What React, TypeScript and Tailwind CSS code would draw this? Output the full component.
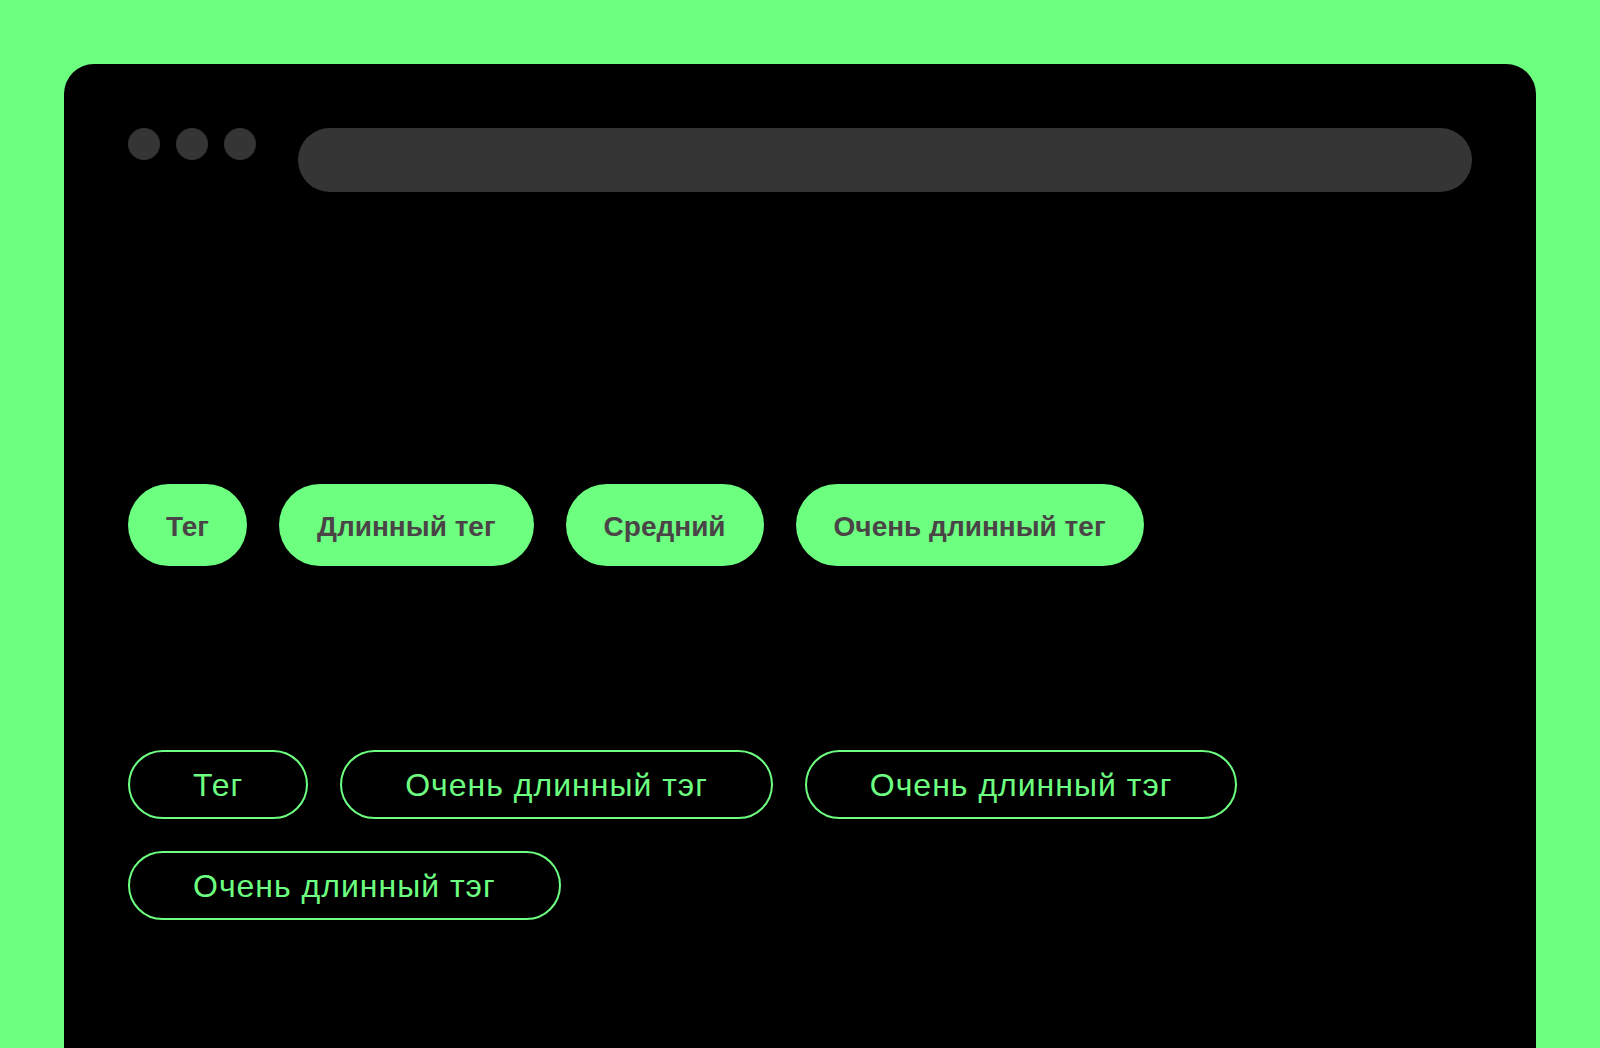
import React from 'react';

const filledTags = ['Тег', 'Длинный тег', 'Средний', 'Очень длинный тег'];
const outlineTags = ['Тег', 'Очень длинный тэг', 'Очень длинный тэг', 'Очень длинный тэг'];

const App = () => {
  return (
    <div
      className="h-[1048px] overflow-hidden bg-[#6cff80] px-16 pt-16"
      style={{ fontFamily: '"Liberation Sans", Arial, sans-serif' }}
    >
      <div className="h-full rounded-t-[30px] bg-black p-16">
        {/* browser chrome */}
        <div className="flex items-start">
          <div className="flex gap-4">
            <span className="h-8 w-8 rounded-full bg-[#353535]" />
            <span className="h-8 w-8 rounded-full bg-[#353535]" />
            <span className="h-8 w-8 rounded-full bg-[#353535]" />
          </div>
          <div className="ml-[42px] h-16 flex-1 rounded-full bg-[#353535]" />
        </div>

        {/* filled tags */}
        <div className="mt-[292px] flex flex-wrap gap-8">
          {filledTags.map((t, i) => (
            <span
              key={i}
              className="flex h-[82px] items-center rounded-full bg-[#6cff80] px-[38px] pt-[3px] text-[28px] font-bold text-[#4a4446]"
            >
              {t}
            </span>
          ))}
        </div>

        {/* outline tags */}
        <div className="mt-[184px] flex max-w-[1150px] flex-wrap gap-8">
          {outlineTags.map((t, i) => (
            <span
              key={i}
              className="flex h-[69px] items-center rounded-full border-2 border-[#6cff80] px-[63px] text-[32px] tracking-[1px] text-[#6cff80]"
            >
              {t}
            </span>
          ))}
        </div>
      </div>
    </div>
  );
};

export default App;
